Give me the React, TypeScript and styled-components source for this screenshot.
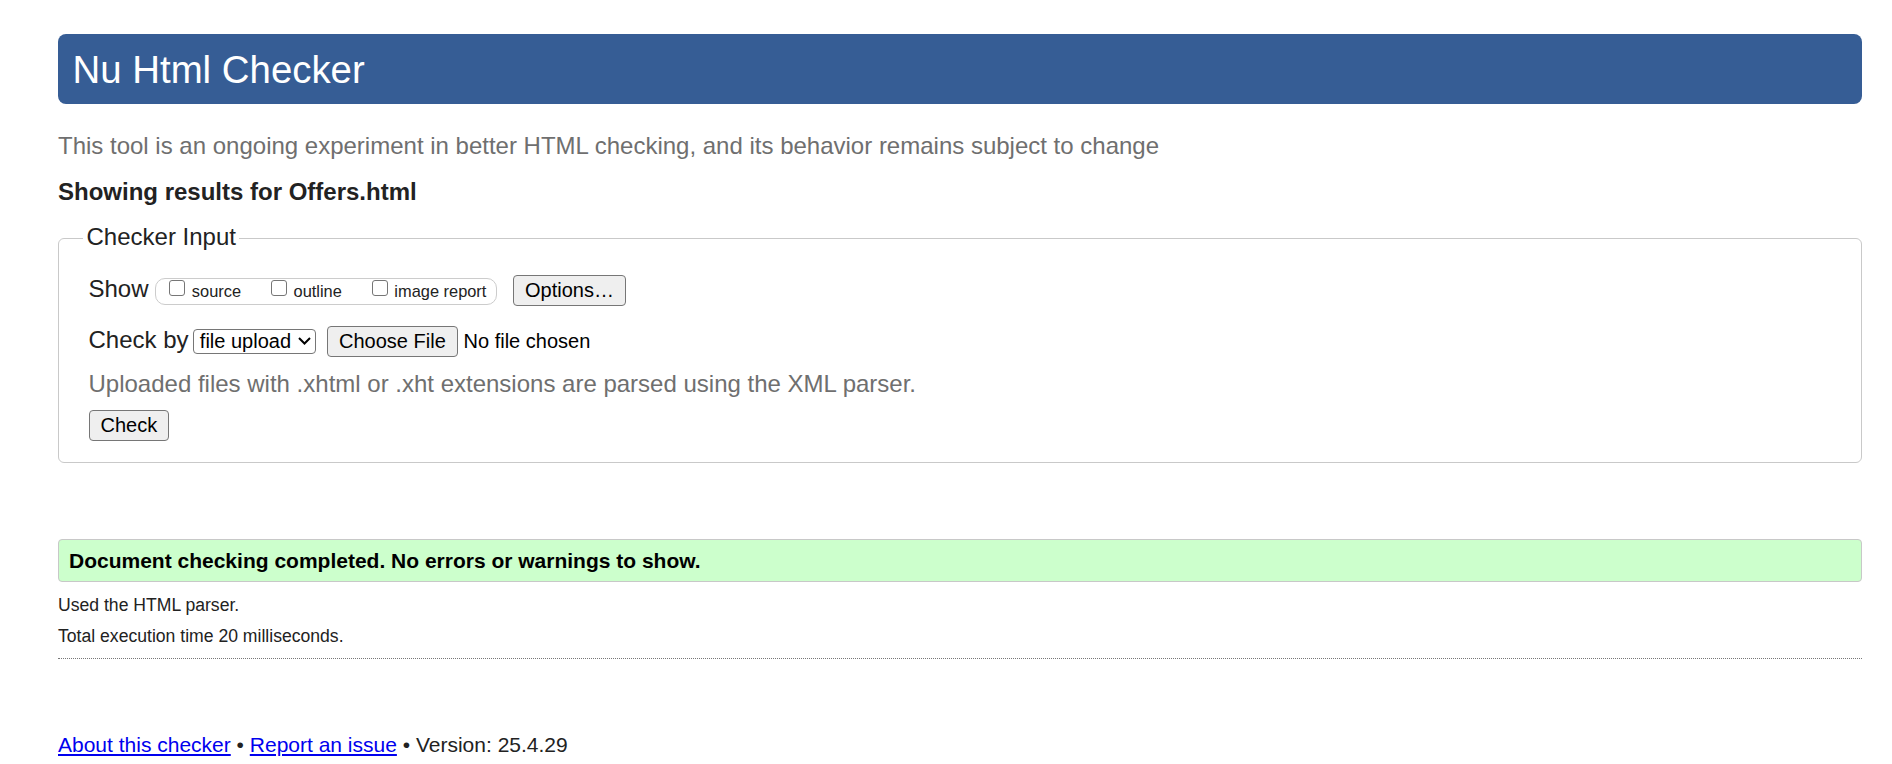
import React from "react"
import styled, { createGlobalStyle } from "styled-components"

const GlobalStyle = createGlobalStyle`
  html, body {
    margin: 0;
    padding: 0;
    background: #ffffff;
  }
  body {
    font-family: "Liberation Sans", Arial, sans-serif;
    color: #222222;
  }
`

const Page = styled.div`
  display: flex;
  flex-direction: column;
  padding: 34px 30px 0 58px;
`

const Header = styled.h1`
  margin: 0;
  height: 70px;
  padding: 0 14.5px;
  border-radius: 8px;
  background: #365d95;
  color: #ffffff;
  font-size: 38.4px;
  font-weight: normal;
  line-height: 71px;
`

const Tagline = styled.p`
  margin: 27.5px 0 0;
  color: #6f6f6f;
  font-size: 24px;
  line-height: 28px;
`

const Showing = styled.p`
  margin: 18px 0 0;
  color: #222222;
  font-size: 24px;
  font-weight: bold;
  line-height: 28px;
`

const Fieldset = styled.fieldset`
  min-width: 0;
  margin: 17px 0 0;
  padding: 21.3px 0 21.5px 23.5px;
  border: 1px solid #c9c9c9;
  border-radius: 6px;
`

const Legend = styled.legend`
  padding: 0 3px 3px 4px;
  color: #222222;
  font-size: 24px;
  line-height: 28px;
`

const FormBody = styled.div`
  display: flex;
  flex-direction: column;
  padding-left: 6px;
`

const Row = styled.div<{ $mt?: number }>`
  display: flex;
  align-items: baseline;
  margin-top: ${(p) => p.$mt ?? 0}px;
`

const FieldLabel = styled.span`
  color: #222222;
  font-size: 24px;
  line-height: 28px;
`

const CheckGroup = styled.span`
  display: inline-flex;
  align-items: baseline;
  box-sizing: border-box;
  height: 27px;
  margin-left: 6.8px;
  padding: 0 10px 0 13px;
  border: 1px solid #cccccc;
  border-radius: 10px;
`

const CheckItem = styled.label<{ $first?: boolean }>`
  display: inline-flex;
  align-items: baseline;
  margin-left: ${(p) => (p.$first ? 0 : 30)}px;
`

const CheckBox = styled.input.attrs({ type: "checkbox" })`
  appearance: none;
  align-self: flex-start;
  box-sizing: border-box;
  width: 16px;
  height: 16px;
  margin: 1px 0 0;
  border: 1px solid #767676;
  border-radius: 3px;
  background: #ffffff;
`

const CheckText = styled.span`
  margin-left: 6.5px;
  color: #222222;
  font-size: 16.4px;
  line-height: 25px;
`

const Button = styled.button<{ $ml?: number }>`
  margin: 0 0 0 ${(p) => p.$ml ?? 0}px;
  padding: 3px 11px;
  border: 1px solid #767676;
  border-radius: 4px;
  background: #efefef;
  color: #000000;
  font-family: "Liberation Sans", Arial, sans-serif;
  font-size: 20px;
  line-height: 23px;
`

const Select = styled.span`
  display: inline-flex;
  align-items: baseline;
  box-sizing: border-box;
  height: 25px;
  margin-left: 4.8px;
  padding: 0 3px 0 5.5px;
  border: 1px solid #767676;
  border-radius: 4px;
  background: #ffffff;
  color: #000000;
  font-size: 20px;
  line-height: 23px;

  svg {
    align-self: center;
    margin-left: 6px;
  }
`

const NoFile = styled.span`
  margin-left: 5.8px;
  color: #000000;
  font-size: 20px;
  line-height: 23px;
`

const Hint = styled.p`
  margin: 13px 0 0;
  color: #6f6f6f;
  font-size: 24px;
  line-height: 28px;
`

const Success = styled.div`
  margin-top: 75.6px;
  padding: 9px 10px 8px;
  border: 1px solid #c8c8c8;
  border-radius: 4px;
  background: #ccffcc;
  color: #000000;
  font-size: 21px;
  font-weight: bold;
  line-height: 24.15px;
`

const Stat = styled.p<{ $mt: number }>`
  margin: ${(p) => p.$mt}px 0 0;
  color: #222222;
  font-size: 17.6px;
  line-height: 20.24px;
`

const Rule = styled.hr`
  height: 0;
  margin: 12px 0 0;
  border: 0;
  border-top: 1px dotted #777777;
`

const Footer = styled.p`
  margin: 74px 0 0;
  color: #222222;
  font-size: 21px;
  line-height: 24.15px;
`

const FooterLink = styled.a`
  color: #0000ee;
  text-decoration: underline;
`

const Chevron = () => (
  <svg width="15" height="10" viewBox="0 0 15 10">
    <polyline
      points="2,2 7.5,7.5 13,2"
      fill="none"
      stroke="#000"
      strokeWidth="2"
    />
  </svg>
)

export default function App() {
  return (
    <Page>
      <GlobalStyle />
      <Header>Nu Html Checker</Header>
      <Tagline>
        This tool is an ongoing experiment in better HTML checking, and its
        behavior remains subject to change
      </Tagline>
      <Showing>Showing results for Offers.html</Showing>
      <Fieldset>
        <Legend>Checker Input</Legend>
        <FormBody>
          <Row>
            <FieldLabel>Show</FieldLabel>
            <CheckGroup>
              <CheckItem $first>
                <CheckBox />
                <CheckText>source</CheckText>
              </CheckItem>
              <CheckItem>
                <CheckBox />
                <CheckText>outline</CheckText>
              </CheckItem>
              <CheckItem>
                <CheckBox />
                <CheckText>image report</CheckText>
              </CheckItem>
            </CheckGroup>
            <Button $ml={15.6}>Options…</Button>
          </Row>
          <Row $mt={20}>
            <FieldLabel>Check by</FieldLabel>
            <Select>
              file upload
              <Chevron />
            </Select>
            <Button $ml={11}>Choose File</Button>
            <NoFile>No file chosen</NoFile>
          </Row>
          <Hint>
            Uploaded files with .xhtml or .xht extensions are parsed using the
            XML parser.
          </Hint>
          <Row $mt={12}>
            <Button>Check</Button>
          </Row>
        </FormBody>
      </Fieldset>
      <Success>Document checking completed. No errors or warnings to show.</Success>
      <Stat $mt={13}>Used the HTML parser.</Stat>
      <Stat $mt={10.8}>Total execution time 20 milliseconds.</Stat>
      <Rule />
      <Footer>
        <FooterLink href="#">About this checker</FooterLink> •{" "}
        <FooterLink href="#">Report an issue</FooterLink> • Version: 25.4.29
      </Footer>
    </Page>
  )
}
